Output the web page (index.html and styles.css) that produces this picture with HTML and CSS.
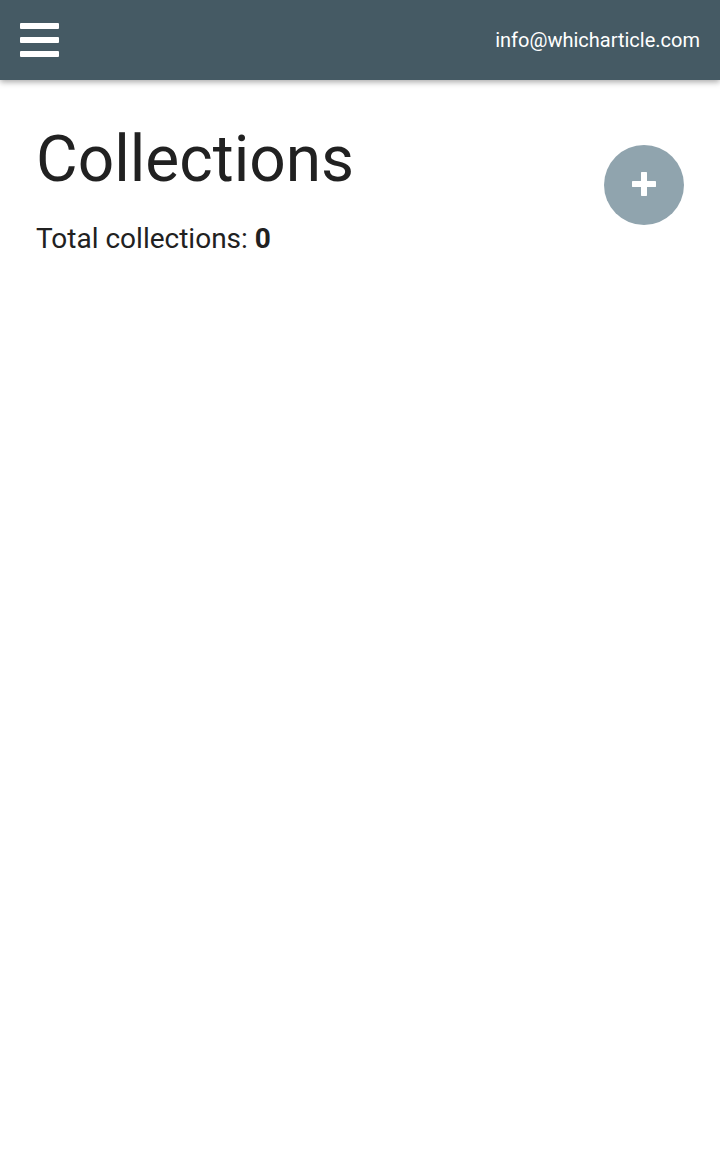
FILE: index.html
```html
<!DOCTYPE html>
<html>
<head>
<meta charset="utf-8">
<link rel="stylesheet" href="styles.css">
</head>
<body>
<header class="topbar">
  <button class="menu-btn" aria-label="Menu">
    <span class="bar"></span><span class="bar"></span><span class="bar"></span>
  </button>
  <span class="user-email">info@whicharticle.com</span>
</header>
<main class="content">
  <div class="intro">
    <h1 class="title">Collections</h1>
    <p class="total">Total collections: <strong>0</strong></p>
  </div>
  <button class="fab" aria-label="Add collection">
    <svg width="24" height="24" viewBox="0 0 24 24"><path d="M12 1.5v21M1.5 12h21" stroke="#fff" stroke-width="6" stroke-linecap="round"/></svg>
  </button>
</main>
</body>
</html>
```
FILE: styles.css
```css
* { box-sizing: border-box; }
html, body { margin: 0; padding: 0; background: #fff; }
body { font-family: Roboto, "Noto Sans", sans-serif; color: #212121; }
.topbar {
  height: 80px;
  background: #455a64;
  display: flex;
  align-items: center;
  justify-content: space-between;
  padding: 0 20px;
  box-shadow: 0 2px 6px rgba(0,0,0,0.35);
  position: relative;
}
.menu-btn {
  background: none; border: 0; padding: 0;
  display: flex; flex-direction: column; gap: 8px;
  width: 39px;
}
.bar { display: block; height: 6px; width: 39px; background: #fff; border-radius: 1px; }
.user-email { color: #fff; font-size: 20px; }
.content {
  display: flex;
  justify-content: space-between;
  align-items: flex-start;
  padding: 0 36px 0 36px;
}
.title {
  font-weight: 400;
  font-size: 64px;
  margin: 42px 0 0 0;
  line-height: 76px;
}
.total {
  margin: 25px 0 0 0;
  font-size: 28px;
  line-height: 32px;
}
.total strong { font-weight: 700; }
.fab {
  margin-top: 65px;
  margin-right: 0;
  width: 80px; height: 80px;
  border-radius: 50%;
  background: #90a4ae;
  border: 0;
  display: flex; align-items: center; justify-content: center;
  padding: 0 0 2px 0;
}
```
